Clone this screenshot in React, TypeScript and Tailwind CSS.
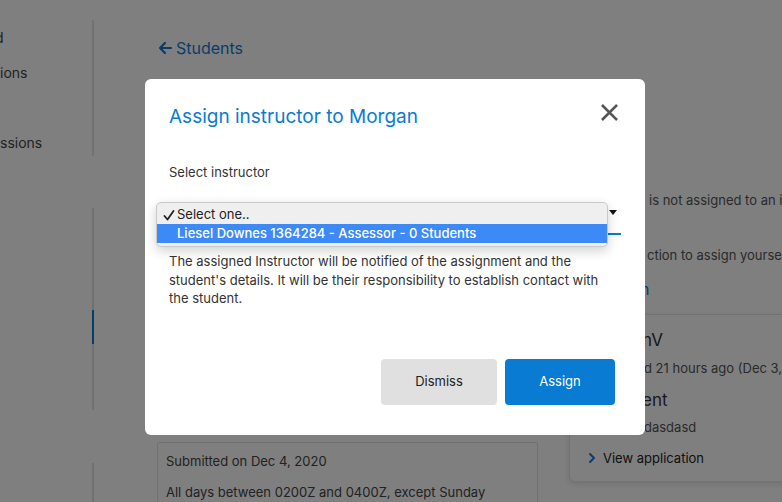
import React from "react";

const font = { fontFamily: "Inter, 'Noto Sans', sans-serif" };

function Sidebar() {
  return (
    <div className="flex w-[94px] shrink-0">
      <div className="flex w-[92px] flex-col overflow-hidden pt-[27px] text-[14px] text-[#444]">
        <div className="h-[35px] whitespace-nowrap leading-[22px] -ml-[5px]">d</div>
        <div className="h-[35px] whitespace-nowrap leading-[22px]">ions</div>
        <div className="h-[35px]" />
        <div className="h-[35px] whitespace-nowrap leading-[22px]">ssions</div>
      </div>
      <div className="flex w-[2px] flex-col">
        <div className="mt-[20px] h-[140px] bg-[#e2e2e2]" />
        <div className="mt-[52px] h-[105px] bg-[#e2e2e2]" />
        <div className="h-[35px] bg-[#1479d6]" />
        <div className="h-[68px] bg-[#e2e2e2]" />
        <div className="mt-[53px] h-[40px] bg-[#e2e2e2]" />
      </div>
    </div>
  );
}

function Main() {
  return (
    <div className="flex flex-1 flex-col pl-[63px] pt-[37px]">
      <div className="flex items-center gap-[3px] text-[16px] leading-[22px] text-[#1479d6]">
        <svg width="16" height="16" viewBox="0 0 16 16" fill="none" stroke="currentColor" strokeWidth="2.2" strokeLinecap="round" strokeLinejoin="round">
          <path d="M14 8H3M8 3L3 8l5 5" />
        </svg>
        <span>Students</span>
      </div>
      <div className="flex gap-[31px]">
        <div className="flex w-[381px] shrink-0 flex-col pt-[383px]">
          <div className="rounded-t-[2px] border border-[#e0e0e0] px-[8px] pt-[8px] text-[13px] leading-[20px] text-[#444]">
            <div>Submitted on Dec 4, 2020</div>
            <div className="mt-[11px]">All days between 0200Z and 0400Z, except Sunday</div>
          </div>
        </div>
        <div className="flex w-[260px] shrink-0 flex-col pt-[131px] text-[13px] text-[#555]">
          <div className="ml-[80px] h-[20px] whitespace-nowrap leading-[20px]">is not assigned to an instructor</div>
          <div className="ml-[78px] mt-[35px] h-[20px] whitespace-nowrap leading-[20px]">ction to assign yourself</div>
          <div className="ml-[71px] mt-[12px] h-[24px] whitespace-nowrap text-[16px] leading-[24px] text-[#1479d6]">n</div>
          <div className="mt-[13px] flex h-[168px] w-[260px] flex-col rounded-[6px] border border-[#e4e4e4] bg-white pl-[17px] pt-[12px] shadow-[0_2px_6px_rgba(0,0,0,0.12)]">
            <div className="ml-[55px] whitespace-nowrap text-[17px] leading-[26px] text-[#333]">nV</div>
            <div className="ml-[57px] mt-[5px] whitespace-nowrap leading-[20px]">d 21 hours ago (Dec 3, 2020)</div>
            <div className="ml-[55px] mt-[9px] whitespace-nowrap text-[17px] leading-[26px] text-[#333]">ent</div>
            <div className="ml-[57px] mt-[4px] whitespace-nowrap leading-[20px]">dasdasd</div>
            <div className="mt-[11px] flex items-center gap-[6px] whitespace-nowrap leading-[20px] text-[#222]">
              <svg width="10" height="12" viewBox="0 0 10 12" fill="none" stroke="#1479d6" strokeWidth="2" strokeLinecap="round" strokeLinejoin="round">
                <path d="M3 2l4 4-4 4" />
              </svg>
              <span>View application</span>
            </div>
          </div>
        </div>
      </div>
    </div>
  );
}

function Modal() {
  return (
    <div className="absolute left-[145px] top-[79px] flex h-[356px] w-[500px] flex-col rounded-[6px] bg-white px-[24px] pt-[24px]">
      <div className="flex items-start justify-between">
        <h2 className="text-[19px] leading-[28px] text-[#0a7bd2]">Assign instructor to Morgan</h2>
        <button className="mr-[3px] mt-[1px] text-[#555]">
          <svg width="17" height="17" viewBox="0 0 18 18" stroke="currentColor" strokeWidth="2.8" strokeLinecap="square">
            <path d="M2 2l14 14M16 2L2 16" />
          </svg>
        </button>
      </div>
      <div className="mt-[31px] text-[13px] leading-[20px] text-[#333]">Select instructor</div>
      <div className="relative mt-[20px] h-[33px] border-b-2 border-[#0a7bd2]">
        <svg className="absolute right-[4px] top-[8px]" width="8" height="5" viewBox="0 0 8 5">
          <path d="M0 0h8L4 5z" fill="#111" />
        </svg>
        <div className="absolute -left-[13px] top-0 flex w-[452px] flex-col overflow-hidden rounded-[5px] border border-[#c9c9c9] bg-[#efefef] pb-[3px] shadow-[0_4px_12px_rgba(0,0,0,0.18)]">
          <div className="flex h-[21px] items-center pt-[3px] text-[13px] text-[#222]">
            <span className="flex w-[20px] justify-start pl-[6px]">
              <svg width="12" height="11" viewBox="0 0 12 11" fill="none" stroke="#222" strokeWidth="1.8" strokeLinecap="round" strokeLinejoin="round">
                <path d="M1.5 6l3 3.5L10.5 1" />
              </svg>
            </span>
            <span>Select one..</span>
          </div>
          <div className="flex h-[19px] items-center bg-[#3d8af6] pl-[20px] text-[13px] font-medium text-white">
            Liesel Downes 1364284 - Assessor - 0 Students
          </div>
        </div>
      </div>
      <p className="mt-[17px] text-[13px] leading-[18.5px] text-[#333]">
        The assigned Instructor will be notified of the assignment and the student's details. It will be their responsibility to establish contact with the student.
      </p>
      <div className="mt-auto mb-[30px] mr-[6px] flex justify-end gap-[8px]">
        <button className="h-[46px] w-[116px] rounded-[4px] bg-[#e0e0e0] text-[13px] text-[#222]">Dismiss</button>
        <button className="h-[46px] w-[110px] rounded-[4px] bg-[#0a7bd2] text-[13px] text-white">Assign</button>
      </div>
    </div>
  );
}

export default function App() {
  return (
    <div className="relative h-[502px] w-[782px] overflow-hidden bg-white" style={font}>
      <div className="flex h-full">
        <Sidebar />
        <Main />
      </div>
      <div className="absolute inset-0 bg-black/50" />
      <Modal />
    </div>
  );
}
